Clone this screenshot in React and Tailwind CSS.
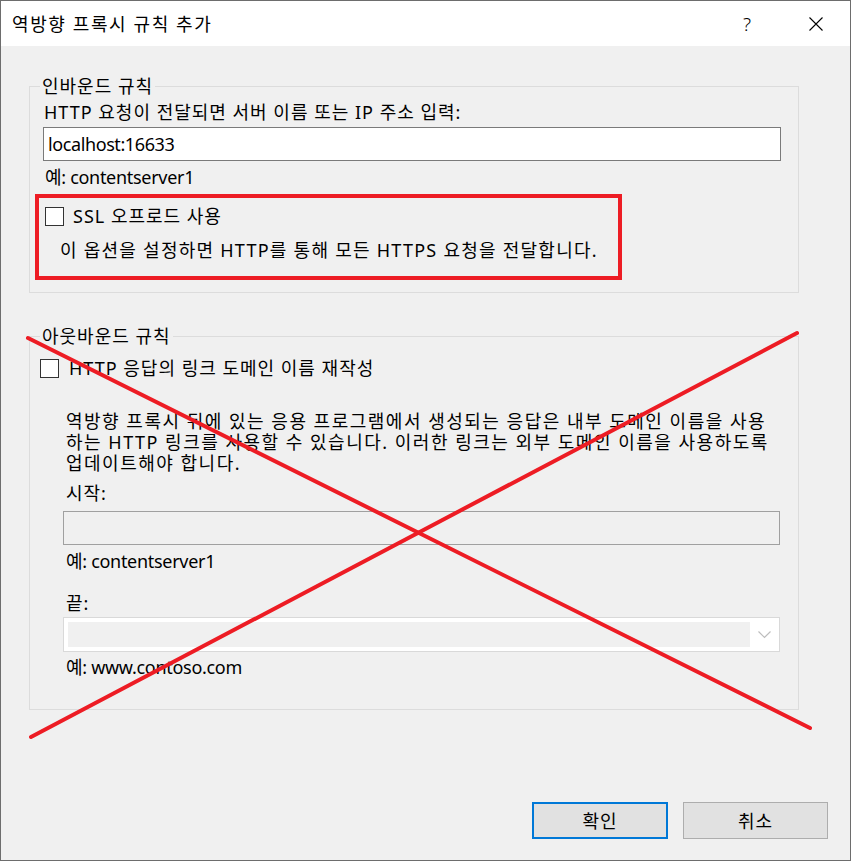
const Check = ({ className = '' }) => (
  <span className={`block h-[19px] w-[19px] shrink-0 border border-[#333333] bg-white ${className}`} />
);

const App = () => {
  return (
    <div className="relative flex h-[861px] w-[851px] flex-col border border-[#6d6d6d] bg-[#f0f0f0] font-['Noto_Sans','Noto_Sans_CJK_KR',sans-serif] text-[18px] leading-[24px] tracking-[1px] text-black">
      {/* title bar */}
      <div className="flex h-[45px] shrink-0 items-center bg-white pl-[11px] pr-[27px]">
        <span className="tracking-[1.6px]">역방향 프록시 규칙 추가</span>
        <span className="ml-auto text-[19px] font-light">?</span>
        <svg className="ml-[57px]" width="14" height="14" viewBox="0 0 14 14">
          <path d="M0.5 0.5 L13.5 13.5 M13.5 0.5 L0.5 13.5" stroke="#000" strokeWidth="1.1" fill="none" />
        </svg>
      </div>

      <div className="flex flex-1 flex-col">
        <fieldset className="ml-[28px] mt-[28px] h-[219px] w-[770px] border border-[#dcdcdc] p-0">
          <legend className="ml-[10px] px-[2px]">인바운드 규칙</legend>
          <p className="ml-[14px] mt-[2px]">HTTP 요청이 전달되면 서버 이름 또는 IP 주소 입력:</p>
          <div className="ml-[13px] mt-[3px] flex h-[34px] w-[738px] items-center border border-[#7a7a7a] bg-white pl-[4px] tracking-[-0.4px]">
            localhost:16633
          </div>
          <p className="ml-[15px] mt-[4px] tracking-[-0.3px]">예: contentserver1</p>
          <div className="ml-[5px] mt-[5px] h-[86px] w-[587px] border-4 border-[#ed1c24] pl-[6px]">
            <div className="mt-[6px] flex h-[24px] items-center">
              <Check />
              <span className="ml-[9px]">SSL 오프로드 사용</span>
            </div>
            <p className="ml-[15px] mt-[10px] tracking-[1.25px]">이 옵션을 설정하면 HTTP를 통해 모든 HTTPS 요청을 전달합니다.</p>
          </div>
        </fieldset>

        <fieldset className="ml-[28px] mt-[31px] h-[386px] w-[770px] border border-[#dcdcdc] p-0">
          <legend className="ml-[10px] px-[2px]">아웃바운드 규칙</legend>
          <div className="ml-[10px] mt-[8px] flex h-[24px] items-center">
            <Check />
            <span className="ml-[10px]">HTTP 응답의 링크 도메인 이름 재작성</span>
          </div>
          <div className="ml-[36px] mt-[31px] whitespace-nowrap leading-[21px] tracking-[1.5px]">
            <p>역방향 프록시 뒤에 있는 응용 프로그램에서 생성되는 응답은 내부 도메인 이름을 사용</p>
            <p>하는 HTTP 링크를 사용할 수 있습니다. 이러한 링크는 외부 도메인 이름을 사용하도록</p>
            <p>업데이트해야 합니다.</p>
          </div>
          <p className="ml-[36px] mt-[7px]">시작:</p>
          <div className="ml-[33px] mt-[6px] h-[34px] w-[717px] border border-[#a0a0a0] bg-[#f0f0f0]" />
          <p className="ml-[36px] mt-[4px] tracking-[-0.3px]">예: contentserver1</p>
          <p className="ml-[36px] mt-[18px]">끝:</p>
          <div className="ml-[33px] mt-[2px] flex h-[35px] w-[717px] border border-[#d9d9d9] bg-white py-[4px] pl-[4px]">
            <div className="flex-1 bg-[#f0f0f0]" />
            <div className="flex w-[29px] items-center justify-center">
              <svg width="13" height="8" viewBox="0 0 13 8">
                <path d="M0.5 0.5 L6.5 6.5 L12.5 0.5" stroke="#bdbdbd" strokeWidth="1.2" fill="none" />
              </svg>
            </div>
          </div>
          <p className="ml-[36px] mt-[3px] tracking-[-0.3px]">예: www.contoso.com</p>
        </fieldset>

        <div className="mt-[92px] flex justify-end gap-[15px] pr-[22px]">
          <button className="flex h-[37px] w-[136px] items-center justify-center border-2 border-[#0078d7] bg-[#e1e1e1]">
            확인
          </button>
          <button className="flex h-[37px] w-[145px] items-center justify-center border border-[#adadad] bg-[#e1e1e1]">
            취소
          </button>
        </div>
      </div>

      {/* red cross drawn over the outbound section */}
      <svg className="pointer-events-none absolute left-0 top-0" width="849" height="859" viewBox="0 0 849 859">
        <path d="M27 337 L809 727" stroke="#ed1c24" strokeWidth="4" strokeLinecap="round" />
        <path d="M796 332 L30 736" stroke="#ed1c24" strokeWidth="4" strokeLinecap="round" />
      </svg>
    </div>
  );
};

export default App;
